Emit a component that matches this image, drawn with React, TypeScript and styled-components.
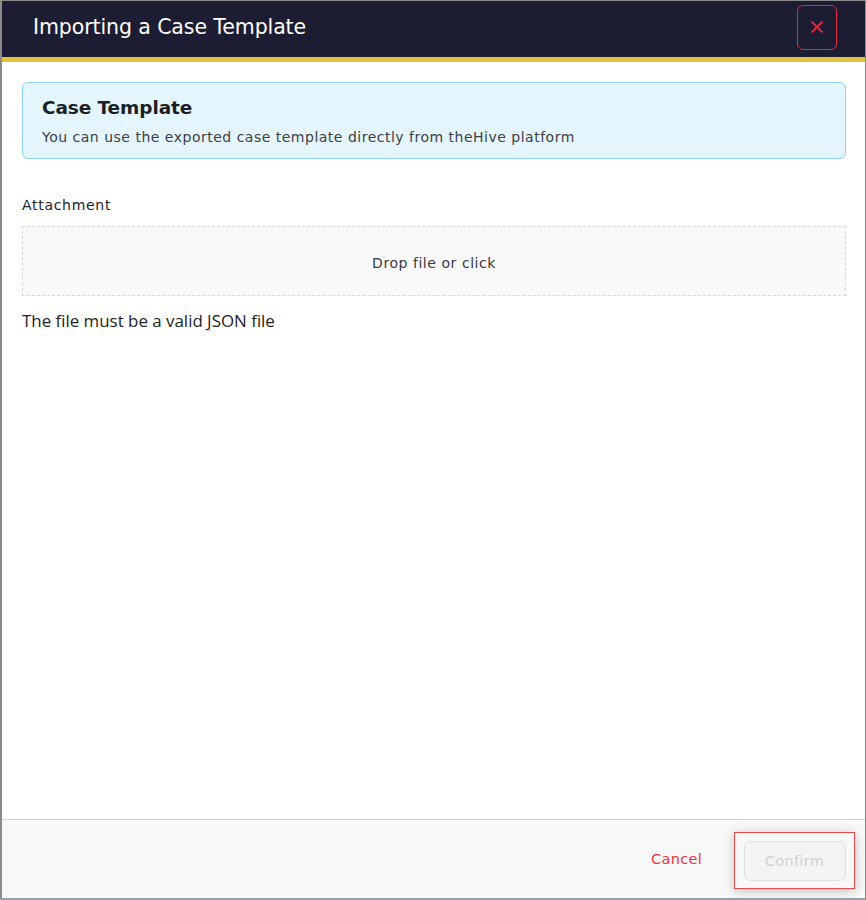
import React from "react";
import styled, { createGlobalStyle } from "styled-components";

const Global = createGlobalStyle`
  html, body { margin: 0; padding: 0; background: #ffffff; }
  * { box-sizing: border-box; }
`;

const Frame = styled.div`
  width: 866px;
  height: 900px;
  display: flex;
  flex-direction: column;
  border: 1px solid #8c8c8c;
  border-left: 2px solid #8c8c8c;
  border-bottom: 2px solid #9aa0b0;
  background: #ffffff;
  font-family: "DejaVu Sans", sans-serif;
`;

const Header = styled.header`
  height: 56px;
  flex: none;
  display: flex;
  align-items: center;
  justify-content: space-between;
  padding: 0 28px 0 31px;
  background: #1c1c33;
  border-bottom: 5px solid #e2c43c;
  box-sizing: content-box;
`;

const Title = styled.h1`
  margin: 0 0 5px;
  font-family: "DejaVu Sans", sans-serif;
  font-weight: 400;
  font-size: 20.5px;
  letter-spacing: -0.1px;
  color: #ffffff;
`;

const CloseButton = styled.button`
  width: 40px;
  height: 45px;
  margin-bottom: 4px;
  display: flex;
  align-items: center;
  justify-content: center;
  background: transparent;
  border: 1px solid #e2283a;
  border-radius: 6px;
  padding: 0;
  cursor: pointer;
`;

const Body = styled.main`
  flex: 1;
  padding: 20px 19px 0 20px;
  display: flex;
  flex-direction: column;
`;

const InfoBox = styled.section`
  height: 77px;
  background: #e4f5fd;
  border: 1px solid #90d3f5;
  border-radius: 6px;
  padding: 12px 19px;
`;

const InfoTitle = styled.h2`
  margin: 0;
  font-family: "DejaVu Sans", sans-serif;
  font-weight: 700;
  font-size: 18.5px;
  letter-spacing: -0.1px;
  line-height: 25px;
  color: #1e1e26;
`;

const InfoText = styled.p`
  margin: 7px 0 0;
  font-family: "DejaVu Sans", sans-serif;
  font-size: 14px;
  letter-spacing: 0.5px;
  line-height: 20px;
  color: #3e3e48;
`;

const Label = styled.label`
  display: block;
  margin-top: 36px;
  font-family: "DejaVu Sans", sans-serif;
  font-size: 14px;
  letter-spacing: 0.7px;
  line-height: 20px;
  color: #222230;
`;

const DropZone = styled.div`
  margin-top: 11px;
  height: 70px;
  display: flex;
  align-items: center;
  justify-content: center;
  padding-top: 3px;
  background: #f9f9f9;
  border: 1px dashed #d8d8d8;
  font-family: "DejaVu Sans", sans-serif;
  font-size: 14px;
  letter-spacing: 0.55px;
  color: #3a3a44;
  cursor: pointer;
`;

const Hint = styled.p`
  margin: 14px 0 0;
  font-family: "Open Sans", sans-serif;
  font-size: 16.9px;
  line-height: 22px;
  color: #222226;
`;

const Footer = styled.footer`
  height: 79px;
  flex: none;
  display: flex;
  align-items: center;
  justify-content: flex-end;
  gap: 32px;
  padding: 0 10px 0 0;
  background: #f8f8f8;
  border-top: 1px solid #d2d2d2;
`;

const CancelButton = styled.button`
  background: transparent;
  border: none;
  padding: 0;
  font-family: "DejaVu Sans", sans-serif;
  font-size: 14.5px;
  letter-spacing: 0.3px;
  color: #f0333f;
  cursor: pointer;
`;

const FocusRing = styled.div`
  width: 121px;
  height: 57px;
  display: flex;
  align-items: center;
  justify-content: center;
  border: 1px solid #e84a4a;
  box-shadow: 0 2px 10px rgba(0, 0, 0, 0.22);
  margin-top: 3px;
`;

const ConfirmButton = styled.button`
  width: 102px;
  height: 40px;
  background: #f4f4f4;
  border: 1px solid #dedede;
  border-radius: 7px;
  font-family: "DejaVu Sans", sans-serif;
  font-size: 14.5px;
  letter-spacing: 0.3px;
  color: #d0d0d0;
  cursor: not-allowed;
`;

export default function App() {
  return (
    <>
      <Global />
      <Frame>
        <Header>
          <Title>Importing a Case Template</Title>
          <CloseButton aria-label="Close">
            <svg width="14" height="14" viewBox="0 0 14 14">
              <path d="M1.5 1.5 L12.5 12.5 M12.5 1.5 L1.5 12.5" stroke="#e2283a" strokeWidth="1.8" fill="none" />
            </svg>
          </CloseButton>
        </Header>
        <Body>
          <InfoBox>
            <InfoTitle>Case Template</InfoTitle>
            <InfoText>You can use the exported case template directly from theHive platform</InfoText>
          </InfoBox>
          <Label>Attachment</Label>
          <DropZone>Drop file or click</DropZone>
          <Hint>The file must be a valid JSON file</Hint>
        </Body>
        <Footer>
          <CancelButton>Cancel</CancelButton>
          <FocusRing>
            <ConfirmButton disabled>Confirm</ConfirmButton>
          </FocusRing>
        </Footer>
      </Frame>
    </>
  );
}
